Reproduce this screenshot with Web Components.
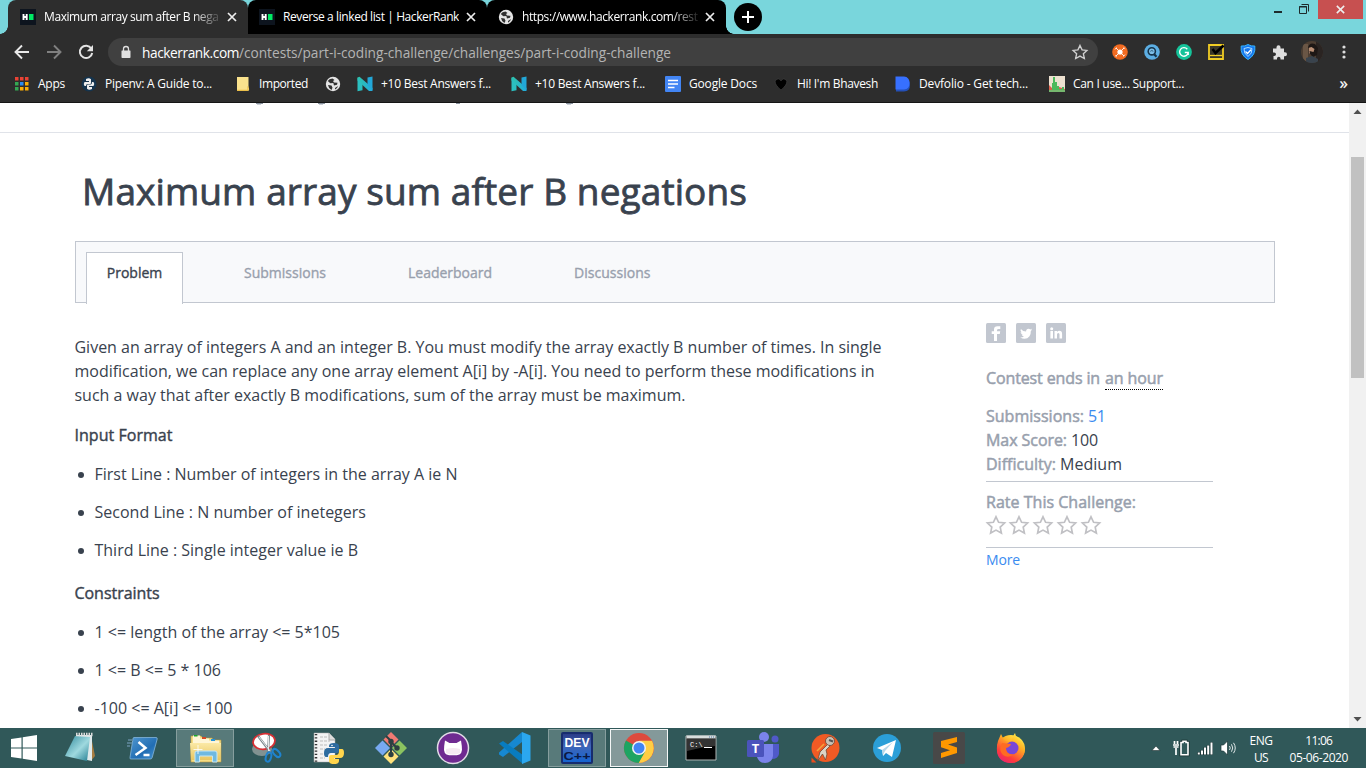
<!DOCTYPE html>
<html lang="en">
<head>
<meta charset="utf-8">
<title>Maximum array sum after B negations</title>
<style>
html,body{margin:0;width:1366px;height:768px;overflow:hidden;background:#fff}
body{font-family:"Open Sans","Noto Sans",sans-serif;color:#39424e}
</style>
</head>
<body>
<desktop-screen></desktop-screen>
<script>
const N16 = '<path d="M.5 1.500L2.500.8 15.500 12v3h-3.500L.5 4.500z" fill="url(#n)"/><path d="M.5 1.500L5.500 8v6.200l-5 1z" fill="#2bbfc0"/><path d="M10.500 1.500l5-1V14l-5-5z" fill="#22a7d8"/><defs><linearGradient id="n"><stop stop-color="#2fc4a8"/><stop offset="1" stop-color="#22aadf"/></linearGradient></defs>';
const STAR = '<path d="M10 1.800l2.600 5.500 6 .7-4.400 4.100 1.200 6L10 15.100 4.600 18.100l1.200-6L1.400 8l6-.7z" fill="none" stroke="currentColor" stroke-width="1.700"/>';
const ICONS = {
hr:[16,'<path fill="#0d141e" d="M0 0h16v16H0z"/><path d="M3.500 5v6M6.700 5v6M3 8h4" stroke="#fff" stroke-width="1.900" fill="none"/><path fill="#00ea64" d="M9 5h4.500v6H9z"/>'],
globe:[16,'<circle cx="8" cy="8" r="7.200" fill="#e4e4e4"/><path d="M7.500 2.500Q4 2.500 2.800 5l2.500 2.200 3-.2.700 2.500 3-.7.500-2-3.500-.2-1-1.600 1.500-1zM3 9l3.500.5 1 2.200-1 2.300Q3.500 12.500 3 9zM10 12l3-2q-.5 2.500-3 3.500z" fill="#303030"/>'],
close:[12,'<path d="M2 2l8 8M10 2l-8 8" stroke="#eee" stroke-width="1.700"/>'],
plus:[28,'<circle cx="14" cy="14" r="14"/><path d="M8 14h12M14 8v12" stroke="#fff" stroke-width="2"/>'],
back:[16,'<path d="M15 8H2M8 1.500L1.500 8 8 14.500" fill="none" stroke="#e8e8e8" stroke-width="1.900"/>'],
fwd:[16,'<path d="M1 8h13M8 1.500L14.500 8 8 14.500" fill="none" stroke="#808080" stroke-width="1.900"/>'],
reload:[16,'<path d="M13.300 4.500A6.200 6.200 0 1 0 14.200 9" fill="none" stroke="#e4e4e4" stroke-width="2"/><path d="M15 1v6.200H8.800z" fill="#e4e4e4"/>'],
lock:[12,'<path d="M2 4.500h8q.5 0 .5.500v6.200q0 .8-.8.800H2.300q-.8 0-.8-.8V5Q1.500 4.500 2 4.500z" fill="#e0e0e0"/><path d="M3.500 5V3a2.500 2.500 0 0 1 5 0V5" fill="none" stroke="#e0e0e0" stroke-width="1.300"/>'],
star:[20,STAR],
e1:[16,'<circle cx="8" cy="8" r="7.800" fill="#f26b21"/><circle cx="8" cy="8" r="2.600" fill="#fff"/><path d="M6 6L4 4M10 6l2-2M6 10l-2 2M10 10l2 2" stroke="#fff" stroke-width=".9"/><path d="M3 5.500l1.500-2M11.500 3.300l1.700 1.500M13 10.500l-1.500 2M4.700 12.800L3 11.500" stroke="#fff" stroke-width=".8"/>'],
e2:[16,'<circle cx="8" cy="8" r="7.800" fill="#5caee3"/><circle cx="7.800" cy="7.300" r="3.600" fill="#7dbfe8" stroke="#16354c" stroke-width="1.600"/><path d="M10 10l2.500 2.700" stroke="#16354c" stroke-width="2.200"/><path d="M6.300 7.300q1.500-1.500 3 0" stroke="#2d5d7d" fill="none"/>'],
e3:[16,'<circle cx="8" cy="8" r="7.900" fill="#15c39a"/><path d="M11.300 5.200A4.300 4.300 0 1 0 12.200 8.500H8.800M12.200 8.500v2.500" stroke="#fff" stroke-width="1.400" fill="none"/>'],
e4:[16,'<path fill="#3a3728" stroke="#f1cd24" stroke-width="1.800" d="M1 1h14v14H1z"/><path d="M2 11.500h12" stroke="#f1cd24" stroke-width="1.300"/><path d="M4.500 5l3 4L15.500 1.500" stroke="#000" stroke-width="2.600" fill="none"/>'],
e5:[16,'<path d="M8 .5q3 2 6.800 1.500Q16 11 8 15.500 0 11 1.200 2 5 2.500 8 .5z" fill="#1577ee" stroke="#36b5ff"/><path d="M8 3.500l4 1q.5 5-4 8-4.500-3-4-8z" fill="none" stroke="#a8ddff"/><path d="M5.500 7.500L7.500 9.500 11 5.700" stroke="#fff" stroke-width="1.300" fill="none"/>'],
puzzle:[16,'<path d="M1 4.500h3.500V3.200a2 2 0 0 1 4 0v1.300H12v3.700h1a2 2 0 0 1 0 4h-1v3.300H8.500v-1a1.700 1.700 0 0 0-3.500 0v1H1.500V12H2.200a1.800 1.800 0 0 0 0-3.600H1z" fill="#dedede"/>'],
avatar:[22,'<defs><clipPath id="c"><circle cx="11" cy="11" r="11"/></clipPath></defs><g clip-path="url(#c)"><path fill="#4d3e32" d="M0 0h22v22H0z"/><path fill="#2a2422" d="M15 0h7v22h-7z"/><path fill="#6a5645" d="M2 3h5v17H2z"/><path fill="#b98f75" d="M8 6q3-3 7 0v7l-3 2-4-3z"/><path fill="#1d1715" d="M7 7q1-6 7-4l3 4-1 7-4 2-3-3-.5-3 4 1 1-3-3-2z"/><path fill="#39434d" d="M5 17l6-2 6 3v4H5z"/></g>'],
dots:[16,'<circle cx="8" cy="3" r="1.600" fill="#ddd"/><circle cx="8" cy="8" r="1.600" fill="#ddd"/><circle cx="8" cy="13" r="1.600" fill="#ddd"/>'],
apps:[16,'<g transform="translate(1 1)"><path fill="#ea4335" d="M0 0h3.500v3.500H0zM5 0h3.500v3.500H5zM10 0h3.500v3.500H10z"/><path fill="#34a853" d="M0 5h3.500v3.500H0zM0 10h3.500v3.500H0z"/><path fill="#2c8cf0" d="M5 5h3.500v3.500H5z"/><path fill="#fbae05" d="M10 5h3.500v3.500H10zM5 10h3.500v3.500H5zM10 10h3.500v3.500H10z"/></g>'],
pipenv:[16,'<circle cx="8" cy="8" r="7.500" fill="#15344e"/><path d="M5 3q3-1.500 5 .2V7q0 1-1 1H6.500Q5 8 5 10H3.500Q2 8 3.500 6H8V5H5zM11 6h1.500q1.500 2 0 4H8v1h3v2q-3 1.500-5-.2V9.500q0-1 1-1h2.500q1.500 0 1.500-2.500z" fill="#eee"/>'],
folder:[16,'<path d="M2 1h11.500v10q1.500 3-.5 4H2z" fill="#fae28d"/><path d="M2 14.300h11v-4" stroke="#e8b73a" fill="none"/>'],
n:[16,N16],
docs:[16,'<rect width="16" height="16" rx="1" fill="#4285f4"/><path d="M3 4.500h10M3 8h10M3 11.500h6.500" stroke="#fff" stroke-width="1.600"/>'],
heart:[16,'<path d="M8 14Q2 9 2.200 5.500 2.700 2.700 5.500 3 7.300 3.200 8 5q.7-1.800 2.500-2 2.800-.3 3.300 2.500Q14 9 8 14z" fill="#000" stroke="#484848" stroke-width=".5"/>'],
dev:[16,'<path d="M1 2h8q6 0 6 7 0 6.500-6 6.500H1z" fill="#2450b8"/><path d="M.5.500H9q5.500.5 5.500 6.500T9 13.500H.5z" fill="#3770ff"/>'],
can:[16,'<path fill="#ede1d0" d="M0 0h16v16H0z"/><path d="M0 16V9l3 3 4-2 9 3v3z" fill="#db604c"/><path d="M3 16V7h1V1h2v5h2v4h2v3h3v-2h2v5z" fill="#4db95c"/><path d="M0 14h16v2H0z" fill="#76b76e"/>'],
fb:[20,'<rect width="20" height="20" rx="1.500" fill="#c2c7d0"/><path d="M8 18V11H5.700V8.200H8V6.500Q8 3.200 11.500 3.200H14.300v2.700h-1.700q-1.600 0-1.600 1.400v.9h3.200L13.800 11H11v7z" fill="#fff"/>'],
tw:[20,'<rect width="20" height="20" rx="1.500" fill="#c2c7d0"/><path transform="translate(.6 .3)" d="M15.500 6.300q-.6.300-1.300.4.700-.4 1-1.200-.7.400-1.500.6a2.500 2.500 0 0 0-4.200 2.200Q6.300 8.200 4.300 5.700q-1.100 2 .8 3.400-.6 0-1.100-.3 0 1.900 2 2.500-.5.100-1.100 0 .6 1.700 2.400 1.800Q5.700 14.400 3.500 14.200q6 3 9.400-1.300 1.500-2.200 1.300-5.200.8-.5 1.300-1.400z" fill="#fff"/>'],
li:[20,'<rect width="20" height="20" rx="1.500" fill="#c2c7d0"/><circle cx="5.700" cy="5.700" r="1.500" fill="#fff"/><path d="M4.400 8h2.600v7.500H4.400zM8.500 8H11v1q.8-1.200 2.400-1.200 2.700 0 2.700 3.200v4.500h-2.600v-4q0-1.500-1.200-1.500-1.300 0-1.300 1.600v3.900H8.500z" fill="#fff"/>'],
win:[28,'<path d="M1 5l10.500-1.600v10H1zM12.700 3.200L27 1v12.400H12.700zM1 14.600h10.500v10L1 23zM12.700 14.600H27V27l-14.300-2.200z" fill="#fff"/>'],
note:[32,'<path d="M26 4l4 20-4 5z" fill="#a77d42"/><path d="M11 3l16 0 0 26-10-2z" fill="#dfe9eb"/><path d="M10 4l15 1-3 24L0 24z" fill="url(#ng)"/><path d="M11 2.500h17" stroke="#ddd" stroke-width="3.500" stroke-dasharray="1.500 1"/><defs><linearGradient id="ng" x2="1" y2="1"><stop stop-color="#2d8799"/><stop offset=".55" stop-color="#9fd9df"/><stop offset="1" stop-color="#227c91"/></linearGradient></defs>'],
ps:[32,'<path d="M7 5.500h22q1.500 0 1.200 1.500l-5 18.500q-.4 1.500-2 1.500H4q-1.500 0-1-1.500L6 6.500q.2-1 1-1z" fill="url(#pg)" stroke="#84b5db" stroke-width=".8"/><path d="M11.500 10l7 6-10 7M16.500 23H22.500" stroke="#fff" stroke-width="2.500" fill="none"/><path d="M1 8h5M0 11h5M0 14h3" stroke="#638aa0" stroke-width="1.500"/><defs><linearGradient id="pg" x2="1" y2="1"><stop stop-color="#5097cf"/><stop offset=".6" stop-color="#226eb4"/><stop offset="1" stop-color="#4795d3"/></linearGradient></defs>'],
exp:[34,'<path d="M3 5h10l2 2h9l1 2h8v22H3z" fill="#f5dd84" stroke="#b99740" stroke-width=".6"/><path d="M5 4.500h7v3h9v2h10v4H5z" fill="#fff6d7"/><path d="M6 4h3.500v1.500H6z" fill="#1aa82b"/><path d="M14 6h4v2h-4z" fill="#d54a27"/><path d="M23 8h4v2h-4z" fill="#2694db"/><path d="M2 12h31l-1 17H3z" fill="url(#eg)"/><path d="M7 31V22q0-2 2-2h18q2 0 2 2v9h-4.500v-6h-13v6z" fill="#6fb9e0" stroke="#c4e6f5"/><path d="M10 14v9M5.500 18.500h9" stroke="#fff" stroke-width=".8"/><defs><linearGradient id="eg" x2="0" y2="1"><stop stop-color="#fbe9a6"/><stop offset="1" stop-color="#e9c65f"/></linearGradient></defs>'],
snip:[32,'<ellipse cx="11" cy="17" rx="10" ry="7" fill="#819291"/><ellipse cx="13" cy="9.500" rx="11" ry="7.700" fill="#fff" stroke="#d62f33" stroke-width="1.800" transform="rotate(-8 13 9.500)"/><path d="M7 4l13 17M18 3l-1 18" stroke="#7c898d" stroke-width="2.200"/><path d="M8 5l11 14M17.500 4v15" stroke="#f2f2f2" stroke-width=".9"/><ellipse cx="17.500" cy="25" rx="2.600" ry="4.800" fill="none" stroke="#1f83cf" stroke-width="2" transform="rotate(16 17.500 25)"/><ellipse cx="25.500" cy="21" rx="2.600" ry="4.800" fill="none" stroke="#1f83cf" stroke-width="2" transform="rotate(-42 25.500 21)"/>'],
py:[32,'<path d="M1 1h15l6 6v23H1z" fill="#f3f3f3" stroke="#aaa" stroke-width=".5"/><path d="M16 1v7h6" fill="#ddd" stroke="#aaa"/><path d="M3 2v28" stroke="#333" stroke-width="2.500" stroke-dasharray="1.300 2"/><path d="M7 5h8M7 9h10M7 13h8M7 17h5M7 22h5M7 26h5" stroke="#bbb" stroke-dasharray="3 1"/><path d="M16 14q0-3 5-3t5 3v5q0 2-2 2h-6q-3 0-3 4h-2q-2 0-2-4 0-5 4-5h7v-1h-6z" fill="#2d6b9f"/><path d="M26 17h3q2 0 2 4 0 5-4 5h-6v1h5v2q0 3-5 3t-5-3v-4q0-2 2-2h5q3 0 3-4z" fill="#ffd54c"/><circle cx="19" cy="13.500" r=".8" fill="#fff"/>'],
git:[32,'<g transform="rotate(45 16 16)"><path fill="#f07a73" d="M4.700 4.700H15.300V15.300H4.700z"/><path fill="#8bc360" d="M16.700 4.700H27.300V15.300H16.700z"/><path fill="#ffe27b" d="M16.700 16.700H27.300V27.300H16.700z"/><path fill="#78a9f1" d="M4.700 16.700H15.300V27.300H4.700z"/></g><path d="M11 4l5 5v13M16 10l6 6" stroke="#2c4042" stroke-width="2" fill="none"/><circle cx="16" cy="9.500" r="2.700" fill="#2c4042"/><circle cx="16" cy="22.500" r="2.700" fill="#2c4042"/><circle cx="22" cy="16" r="2.700" fill="#2c4042"/>'],
gh:[34,'<circle cx="17" cy="17" r="15.500" fill="#6f2a91" stroke="#e2dce7" stroke-width="1.500"/><path d="M9 9.500l4.500 2.500h7L25 9.500l.8 5.500q1.300 9-5 9.300h-7.600Q6.900 24 8.200 15z" fill="#fff"/><path d="M10 18q7-2 14 0v4q-7 3-14 0z" fill="#f5e9f2"/>'],
vs:[34,'<path d="M24 1v10L5 26 1 23.500v-2z" fill="#1688d1"/><path d="M1 12.500l4-2.500L25 24v9z" fill="#087cc0"/><path d="M24 1l8.500 3.500v25L24 33z" fill="#2ba7ef"/>'],
devc:[32,'<rect width="32" height="32" rx="2" fill="#172c6e"/><path fill="url(#dg)" d="M2 2h28v28H2z"/><text x="16" y="14.500" text-anchor="middle" font-family="Liberation Sans" font-weight="bold" font-size="12" textLength="25" lengthAdjust="spacingAndGlyphs" fill="#fff">DEV</text><text x="16" y="28" text-anchor="middle" font-family="Liberation Sans" font-weight="bold" font-size="11" textLength="27" lengthAdjust="spacingAndGlyphs" fill="#0b1943">C++</text><defs><linearGradient id="dg" x2="0" y2="1"><stop stop-color="#2b3c88"/><stop offset=".45" stop-color="#3e66b8"/><stop offset="1" stop-color="#1664d0"/></linearGradient></defs>'],
chrome:[32,'<circle cx="16" cy="16" r="15" fill="#dd4b3e"/><path d="M16 16L3 8.500A15 15 0 0 0 16 31l6.500-11.500z" fill="#1da462"/><path d="M29 8.800H16l6.200 10.800L15.700 31A15 15 0 0 0 29 8.800z" fill="#ffce44"/><circle cx="16" cy="16" r="7" fill="#f3f3f3"/><circle cx="16" cy="16" r="5.500" fill="#4285f4"/>'],
cmd:[32,'<path d="M1 4h30v24H1z" fill="#000" stroke="#aeb4b4"/><path d="M1.500 3.500h29v3h-29z" fill="#d8dddd"/><path d="M2 7h28v7q-14 1-28 5z" fill="#333"/><path d="M24 5h5" stroke="#4d74a5" stroke-dasharray="1 1"/><text x="5" y="15" fill="#fff" font-family="Liberation Mono" font-size="7">C:\\</text><path d="M19 15.500h8" stroke="#fff"/>'],
teams:[34,'<circle cx="18" cy="6" r="5" fill="#7b83eb"/><circle cx="29" cy="8" r="3.500" fill="#5059c9"/><path d="M24 13h9v10q-1 5-7 5z" fill="#5059c9"/><path d="M11 13h16v12q-1 7-8 7-6 0-8-6z" fill="#7b83eb"/><rect x="1" y="9" width="17" height="17" rx="1.500" fill="#4b53bc"/><text x="9.500" y="22" text-anchor="middle" fill="#fff" font-family="Open Sans" font-weight="bold" font-size="13">T</text>'],
post:[32,'<circle cx="16.500" cy="16" r="14" fill="#f15a24"/><path d="M2.500 25.500v5h5z" fill="#e94d1e"/><path d="M19 12l-8 8-2.500 9 5-7 3 6 1.500-6-1-4 4-4z" fill="#ddd3c6" stroke="#704a36" stroke-width=".8"/><path d="M15 12l-7 7" stroke="#f3a33d" stroke-width="1.600"/><circle cx="21" cy="9" r="4.500" fill="#ccc2b5" stroke="#694433" stroke-width=".8"/><path d="M20 8l4 1.500" stroke="#555" stroke-width="2"/>'],
tele:[32,'<circle cx="16" cy="16" r="14" fill="#2b9fd8"/><path d="M6 16l19-8-4 17-6-4-3 3-1-6z" fill="#fff"/><path d="M11 18l11-8-8 9-2 4z" fill="#b8d8e9"/>'],
sub:[32,'<rect width="32" height="32" rx="1.500" fill="#484848"/><path d="M8 9l16-4v5l-9 2.500 9 3V21L8 26v-5l9-2.700-9-3z" fill="#ff9800"/>'],
fire:[34,'<circle cx="17" cy="18" r="14" fill="url(#fg)"/><path d="M4 10l3-7 3 6 7 3q2-8 4-10 1 6 6 8 7 9 1 16-5 6-12 6Q4 31 3 20q-.5-5 1-10z" fill="url(#fg)"/><circle cx="18" cy="17" r="6.500" fill="#7847d8"/><path d="M8 12l9 1q-1 3-5 4 0 7 8 6.500-6 4-11 .5-4-4-2-10z" fill="#ff6b22"/><defs><linearGradient id="fg" x1=".8" x2=".2" y2="1"><stop stop-color="#fff44f"/><stop offset=".35" stop-color="#ffae23"/><stop offset=".75" stop-color="#ff3b3b"/><stop offset="1" stop-color="#e62277"/></linearGradient></defs>'],
up:[10,'<path d="M1 7.500L5 3l4 4.500z" fill="#fff" stroke="#233" stroke-width=".6"/>'],
bat:[16,'<path d="M8 2.500h2V1.300h3v1.200h2v12.200H8z" fill="none" stroke="#132a2b" stroke-width="3"/><path d="M8 2.500h2V1.300h3v1.200h2v12.200H8z" fill="#31595a" stroke="#fff" stroke-width="1.600"/><path d="M1.500 1v3M4.500 1v3M0 5h6M.5 7h5M3 8v7" stroke="#fff" stroke-width="1.700"/>'],
net:[16,'<path d="M1.800 15v-3M5 15v-5M8 15V7M11.200 15V5M14.500 15V2" stroke="#1b3536" stroke-width="3"/><path d="M1.800 14.500v-2M5 14.500v-4M8 14.500V7.500M11.200 14.500V5.500M14.500 14.500V2.500" stroke="#fff" stroke-width="2"/>'],
vol:[16,'<path d="M1 5h2.500L7.500 1v14l-4-4H1z" fill="#fff" stroke="#1b3536" stroke-width=".7"/><path d="M9.500 6q1.500 2 0 4M11.500 4.300q2.500 3.700 0 7.400M13.500 2.800q3.500 5.200 0 10.400" stroke="#e2eaea" fill="none"/>'],
min:[12,'<path d="M2 9h8" stroke="#1d2b2c" stroke-width="2"/>'],
max:[12,'<path d="M1.500 3.500h7v7h-7zM3.500 1.500h7v7" fill="none" stroke="#1d2b2c"/><path d="M1 4h8" stroke="#1d2b2c"/>'],
sup:[9,'<path d="M.5 7l4-4.500 4 4.500z" fill="#505050"/>'],
sdn:[9,'<path d="M.5 2l4 4.500 4-4.500z" fill="#505050"/>']
};
const define=(name,css,html,after)=>customElements.define(name,class extends HTMLElement{
  connectedCallback(){
    const r=this.attachShadow({mode:'open'});
    r.innerHTML='<style>'+css+'</style>'+(typeof html==='function'?html(this):html);
    if(after)after(this,r);
  }
});
define('app-icon',':host{display:block;flex:none}svg{display:block;overflow:visible}',el=>{
  const [n,body]=ICONS[el.getAttribute('name')], s=el.getAttribute('size')||n;
  return `<svg width="${s}" height="${s}" viewBox="0 0 ${n} ${n}">${body}</svg>`;
});
/* One line of text whose letter spacing is adjusted so that it fills a given width. */
define('fit-text',':host{display:inline-block;white-space:pre;flex:none;overflow:visible}span{display:inline-block}','<span><slot></slot></span>',(el,r)=>{
  const w=+el.getAttribute('w'), s=r.querySelector('span');
  el.style.width=w+'px';
  s.style.letterSpacing=((w-s.getBoundingClientRect().width)/el.textContent.length).toFixed(4)+'px';
});
define('browser-tab',`:host{display:flex;box-sizing:border-box;height:34px;width:239px;background:#000;color:#fff;border-radius:8px 8px 0 0;align-items:center;padding:0 0 0 11px;font-size:12px;flex:none}
:host([active]){background:#2d2d2d;width:240px;padding-left:12px}
div{width:176px;margin-left:8px;overflow:hidden;line-height:20px;height:20px}
:host([fade]) div{-webkit-mask-image:linear-gradient(90deg,#000 148px,transparent 180px)}
app-icon.c{margin-left:6px}`,el=>`<app-icon name="${el.getAttribute('icon')}"></app-icon><div><fit-text w="${el.getAttribute('w')}">${el.textContent}</fit-text></div><app-icon class="c" name="close"></app-icon>`);
define('tab-strip',`:host{display:flex;height:34px;background:#79d6dc}
.edge{width:8px;flex:none;background:radial-gradient(circle at 0 26px,transparent 7.500px,#2d2d2d 8px) 0 0/8px 34px;clip-path:inset(26px 0 0 0)}
.edge.r{background:radial-gradient(circle at 8px 26px,transparent 7.500px,#000 8px)}
.plus{margin:3px 0 0 0}.sp{flex:1}.w{display:flex;align-items:flex-start}
.close{width:45px;height:19px;background:#c75050;margin-right:3px;display:grid;place-items:center;margin-left:8px}`,
`<span class="edge"></span><browser-tab active fade icon="hr" w="174.500">Maximum array sum after B nega</browser-tab><browser-tab icon="hr" w="176">Reverse a linked list | HackerRank</browser-tab><browser-tab fade icon="globe" w="175.500">https://www.hackerrank.com/rest</browser-tab><span class="edge r"></span><app-icon class="plus" name="plus"></app-icon><span class="sp"></span><div class="w"><app-icon name="min" style="margin-top:3px"></app-icon><app-icon name="max" style="margin:3px 0 0 14px"></app-icon><span class="close"><app-icon name="close" size="11"></app-icon></span></div>`);
define('tool-bar',`:host{display:flex;height:34px;background:#2d2d2d;align-items:center;padding-top:2px;box-sizing:border-box;color:#fff}
.nav{display:flex;gap:16px;width:94px;padding-left:14px}.box{width:990px;height:28px;border-radius:14px;background:#404040;display:flex;align-items:center;box-sizing:border-box;padding:0 10px 0 12px;font-size:13.700px}
.url{margin-left:10px;line-height:27px;flex:1;display:flex}.rest{color:#b4b4b4}.star{color:#d0d0d0}
.ext{display:flex;margin-left:6px}.ext span{width:32px;display:grid;place-items:center}`,
`<div class="nav"><app-icon name="back"></app-icon><app-icon name="fwd"></app-icon><app-icon name="reload"></app-icon></div><div class="box"><app-icon name="lock"></app-icon><div class="url"><fit-text w="97">hackerrank.com</fit-text><fit-text class="rest" w="432">/contests/part-i-coding-challenge/challenges/part-i-coding-challenge</fit-text></div><app-icon class="star" name="star" size="16"></app-icon></div><div class="ext">${['e1','e2','e3','e4','e5','puzzle','avatar','dots'].map(i=>`<span><app-icon name="${i}"></app-icon></span>`).join('')}</div>`);
define('bookmark-item',':host{display:flex;align-items:center;gap:8px;flex:none;line-height:20px}',el=>{
 el.style.width=el.getAttribute('slot-width')+'px';
 return `<app-icon name="${el.getAttribute('icon')}"></app-icon>`+(el.textContent?`<fit-text w="${el.getAttribute('w')}">${el.textContent}</fit-text>`:'');
});
define('bookmark-bar',':host{display:flex;height:35px;box-sizing:border-box;background:#2d2d2d;border-bottom:1px solid #151515;padding:0 0 2px 14px;align-items:center;font-size:12px;color:#fff}.more{margin-left:auto;padding-right:18px;font-size:17px;line-height:20px;height:22px;-webkit-text-stroke:.2px}',
[['apps',67,'Apps',27],['pipenv',154,'Pipenv: A Guide to...',107],['folder',90,'Imported',49],['globe',32,'',0],['n',154,'+10 Best Answers f...',110],['n',154,'+10 Best Answers f...',110],['docs',108,'Google Docs',68],['heart',122,"Hi! I'm Bhavesh",81],['dev',154,'Devfolio - Get tech...',109],['can',150,'Can I use... Support...',111]].map(b=>`<bookmark-item icon="${b[0]}" slot-width="${b[1]}" w="${b[3]}">${b[2]}</bookmark-item>`).join('')+'<span class="more">»</span>');
define('scroll-rail',':host{display:flex;flex-direction:column;align-items:center;width:17px;background:#f1f1f1;flex:none}.t{width:13px;height:221px;background:#c1c1c1;margin-top:41px}app-icon{margin-top:4px}.d{margin:auto 0 4px}','<app-icon name="sup"></app-icon><div class="t"></div><app-icon class="d" name="sdn"></app-icon>');
define('tab-nav',`:host{display:flex;box-sizing:border-box;width:1200px;height:62px;border:1px solid #c2c7d0;background:#f8f9fb;padding:10px 0 0 10px;font-size:14px;color:#98a0ad}
span{height:42px;line-height:42px;-webkit-text-stroke:.35px currentColor}
.on{background:#fff;color:#39424e;border:1px solid #c2c7d0;border-bottom:0;height:51px;line-height:40px;width:95px;text-align:center;margin-right:61px}
.on fit-text{text-align:left}.s{margin-right:82px}`,
'<span class="on"><fit-text w="55.500">Problem</fit-text></span><span class="s"><fit-text w="82">Submissions</fit-text></span><span class="s"><fit-text w="84">Leaderboard</fit-text></span><span><fit-text w="76.500">Discussions</fit-text></span>');
define('bullet-item',':host{display:flex;align-items:center;height:24px;margin-bottom:14px}i{width:6px;height:6px;border-radius:50%;background:#39424e;margin:2px 11px 0 3px}',el=>`<i></i><fit-text w="${el.getAttribute('w')}">${el.textContent}</fit-text>`);
define('problem-text',`:host{display:block;width:911.500px;font-size:16px;line-height:24px;padding-top:32px;color:#39424e}
p{margin:0 0 16px}p fit-text{display:block}b{display:block;font-weight:400;-webkit-text-stroke:.4px currentColor;color:#39424e}b{margin-bottom:15px}b.c{margin-top:19px}`,
`<p><fit-text w="807">Given an array of integers A and an integer B. You must modify the array exactly B number of times. In single</fit-text><fit-text w="800">modification, we can replace any one array element A[i] by -A[i]. You need to perform these modifications in</fit-text><fit-text w="611">such a way that after exactly B modifications, sum of the array must be maximum.</fit-text></p>
<b><fit-text w="98">Input Format</fit-text></b>
<bullet-item w="363">First Line : Number of integers in the array A ie N</bullet-item><bullet-item w="271.500">Second Line : N number of inetegers</bullet-item><bullet-item w="263.500">Third Line : Single integer value ie B</bullet-item>
<b class="c"><fit-text w="85">Constraints</fit-text></b>
<bullet-item w="245.500">1 &lt;= length of the array &lt;= 5*105</bullet-item><bullet-item w="126.500">1 &lt;= B &lt;= 5 * 106</bullet-item><bullet-item w="138">-100 &lt;= A[i] &lt;= 100</bullet-item>`);
define('contest-info',`:host{display:block;width:227px;padding-top:20px;font-size:16px;line-height:24px;color:#39424e}
.soc,.row,.stars{display:flex}.soc{gap:10px;margin-bottom:23px}.row{height:24px}.g{color:#98a0ad;font-weight:400;-webkit-text-stroke:.5px currentColor}
.row .g{margin-right:4px}.ends .g{margin-right:5px}.hour{border-bottom:1px dotted #000;height:23px;line-height:24px}.ends{margin-bottom:14px}
.blue{color:#3a8bf0}hr{border:0;border-top:1px solid #c2c7d0;margin:5px 0 8px}.stars{gap:3.750px;color:#c0c0c4;height:20px;padding-top:1px;margin-left:-.5px}hr.b{margin:12px 0 2px}.more{font-size:14px;line-height:20px;display:block}`,
`<div class="soc"><app-icon name="fb"></app-icon><app-icon name="tw"></app-icon><app-icon name="li"></app-icon></div>
<div class="row ends"><fit-text class="g" w="114">Contest ends in</fit-text><fit-text class="g hour" w="58">an hour</fit-text></div>
<div class="row"><fit-text class="g" w="98">Submissions:</fit-text><fit-text class="blue" w="17.500">51</fit-text></div><div class="row"><fit-text class="g" w="81">Max Score:</fit-text><fit-text w="27">100</fit-text></div><div class="row"><fit-text class="g" w="70">Difficulty:</fit-text><fit-text w="62">Medium</fit-text></div><hr>
<fit-text class="g" style="display:block" w="150">Rate This Challenge:</fit-text><div class="stars">${'<app-icon name="star"></app-icon>'.repeat(5)}</div><hr class="b"><fit-text class="blue more" w="34">More</fit-text>`);
define('challenge-page',`:host{display:block;flex:1;background:#fff;overflow:hidden}
.crumb{height:29px;border-bottom:1px solid #e0e3e9}.crumb svg{display:block}
h1{margin:0;padding:30px 0 0 82px;height:78px;font-size:37px;line-height:55px;font-weight:400;-webkit-text-stroke:.8px currentColor}
tab-nav{margin-left:75px}.cols{display:flex;padding-left:74.500px}`,
`<div class="crumb"><svg width="700" height="4"><path d="M256 0h7M318 0h7M456 0h4M566 0h7" stroke="#89929e" stroke-width="2"/><path d="M257 1.500h4M319 1.500h4M567 1.500h4" stroke="#c9ced5"/></svg></div><h1><fit-text w="665">Maximum array sum after B negations</fit-text></h1><tab-nav></tab-nav><div class="cols"><problem-text></problem-text><contest-info></contest-info></div>`);
define('task-bar',`:host{display:flex;height:40px;background:#305859;align-items:center;color:#fff;font-size:12px}
span{box-sizing:border-box;width:58px;height:38px;margin-right:4px;display:grid;place-items:center;flex:none}
.w{width:48px}.o{background:#587a7a;border:1px solid #869e9e}.a{background:#84999a;border:1px solid #f5f7f7}
.tray{margin-left:auto;display:flex;align-items:center;gap:8px}.tx{line-height:17px;display:flex;flex-direction:column;align-items:center;padding-top:1px}`,
'<span class="w"><app-icon name="win"></app-icon></span>'+['note','ps','exp','snip','py','git','gh','vs','devc','chrome','cmd','teams','post','tele','sub','fire'].map(n=>`<span class="${n==='exp'||n==='devc'?'o':n==='chrome'?'a':''}"><app-icon name="${n}"></app-icon></span>`).join('')+
`<div class="tray"><app-icon name="up"></app-icon><app-icon name="bat" style="margin-left:4px"></app-icon><app-icon name="net"></app-icon><app-icon name="vol" style="margin-left:-1px"></app-icon><div class="tx" style="margin-left:6px"><fit-text w="23">ENG</fit-text><fit-text w="14">US</fit-text></div><div class="tx" style="margin:0 18px 0 9px"><fit-text w="27">11:06</fit-text><fit-text w="58.500">05-06-2020</fit-text></div></div>`);
define('desktop-screen',':host{display:flex;flex-direction:column;width:1366px;height:768px}main{flex:1;display:flex;min-height:0}','<tab-strip></tab-strip><tool-bar></tool-bar><bookmark-bar></bookmark-bar><main><challenge-page></challenge-page><scroll-rail></scroll-rail></main><task-bar></task-bar>');
</script>
</body>
</html>
